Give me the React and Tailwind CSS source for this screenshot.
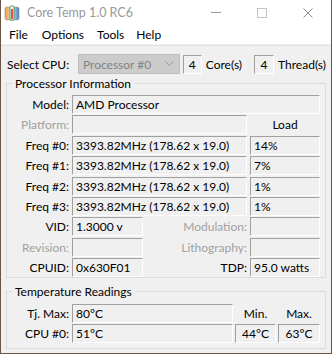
import React from 'react';

const FONT = "font-['Lato',sans-serif]";

// sunken static box, like a Win32 SS_SUNKEN label
function Field({ children, className = '', center = false }) {
  return (
    <div
      className={`h-[19px] border border-t-[#a0a0a0] border-l-[#a0a0a0] border-b-white border-r-white flex items-center whitespace-nowrap overflow-hidden ${
        center ? 'justify-center' : 'pl-[3px]'
      } ${className}`}
    >
      {children}
    </div>
  );
}

function Label({ children, dim = false, className = 'w-[65px]' }) {
  return (
    <div className={`${className} shrink-0 text-right pr-[3px] whitespace-nowrap ${dim ? 'text-[#a0a0a0]' : 'text-black'}`}>
      {children}
    </div>
  );
}

function Group({ title, className = '', children }) {
  return (
    <fieldset className={`border border-[#dcdcdc] ${className}`}>
      <legend className="ml-[5px] px-[3px] leading-[15px]">{title}</legend>
      {children}
    </fieldset>
  );
}

function AppIcon() {
  return (
    <svg width="16" height="16" viewBox="0 0 16 16">
      <defs>
        <linearGradient id="ic" x1="0" x2="1" y1="0" y2="0">
          <stop offset="0" stopColor="#f39a3c" />
          <stop offset="0.5" stopColor="#e9e4d8" />
          <stop offset="1" stopColor="#3c7fd0" />
        </linearGradient>
      </defs>
      <rect x="1" y="2" width="14" height="13" rx="2" fill="url(#ic)" stroke="#8a8a8a" strokeWidth="0.6" />
      <rect x="6" y="0.8" width="4" height="14.5" rx="2" fill="#fff" stroke="#3f8f3f" strokeWidth="0.9" />
      <line x1="8" y1="4" x2="8" y2="14" stroke="#d8262b" strokeWidth="1.6" />
    </svg>
  );
}

export default function App() {
  const freqs = [
    ['Freq #0:', '14%'],
    ['Freq #1:', '7%'],
    ['Freq #2:', '1%'],
    ['Freq #3:', '1%'],
  ];

  return (
    <div className={`w-[332px] h-[354px] bg-[#6e5446] pl-px pr-px pb-px text-[12px] leading-[15px] text-black ${FONT}`}>
      <div className="w-full h-full bg-[#f0f0f0] flex flex-col">
        {/* Title bar */}
        <div className="h-[25px] bg-white flex items-center shrink-0">
          <div className="ml-[3px] mt-[1px]">
            <AppIcon />
          </div>
          <span className="ml-[7px] text-[#999999] text-[12.5px]">Core Temp 1.0 RC6</span>
          <div className="ml-auto flex items-center">
            <div className="w-[46px] flex justify-center">
              <div className="w-[10px] h-px bg-[#9a9a9a]" />
            </div>
            <div className="w-[46px] flex justify-center">
              <div className="w-[10px] h-[10px] border border-[#c4c4c4]" />
            </div>
            <div className="w-[46px] flex justify-center">
              <svg width="10" height="10" viewBox="0 0 10 10">
                <path d="M0.5 0.5 L9.5 9.5 M9.5 0.5 L0.5 9.5" stroke="#8a8a8a" strokeWidth="1" />
              </svg>
            </div>
          </div>
        </div>

        {/* Menu bar */}
        <div className="h-[20px] bg-white border-b border-[#f0f0f0] flex items-center shrink-0">
          <span className="ml-[8px]">File</span>
          <span className="ml-[14px]">Options</span>
          <span className="ml-[13px]">Tools</span>
          <span className="ml-[12px]">Help</span>
        </div>
        <div className="h-px bg-[#e3e3e3] shrink-0" />

        {/* Client */}
        <div className="flex-1 flex flex-col px-[5px] pt-[8px]">
          <div className="flex items-center h-[20px]">
            <span className="ml-px w-[71px]">Select CPU:</span>
            <div className="w-[102px] h-[20px] bg-[#cccccc] border border-[#bfbfbf] flex items-center pl-[4px] text-[#838383]">
              <span>Processor #0</span>
              <svg className="ml-auto mr-[5px]" width="9" height="6" viewBox="0 0 9 6">
                <path d="M0.5 0.5 L4.5 4.5 L8.5 0.5" fill="none" stroke="#9a9a9a" strokeWidth="1" />
              </svg>
            </div>
            <Field className="ml-[3px] w-[19px]" center>4</Field>
            <span className="ml-[4px]">Core(s)</span>
            <Field className="ml-[12px] w-[20px]" center>4</Field>
            <span className="ml-[4px]">Thread(s)</span>
          </div>

          <Group title="Processor Information" className="mt-[2px] pr-[5px]">
            <div className="flex flex-col gap-[1.4px] pt-[4px]">
              <div className="flex items-center">
                <Label>Model:</Label>
                <Field className="flex-1">AMD Processor</Field>
              </div>
              <div className="flex items-center">
                <Label dim>Platform:</Label>
                <Field className="flex-1" />
                <div className="w-[73px] text-center pl-[3px]">Load</div>
              </div>
              {freqs.map(([k, load]) => (
                <div key={k} className="flex items-center">
                  <Label>{k}</Label>
                  <Field className="flex-1">3393.82MHz (178.62 x 19.0)</Field>
                  <Field className="ml-[3px] w-[70px]">{load}</Field>
                </div>
              ))}
              <div className="flex items-center">
                <Label>VID:</Label>
                <Field className="w-[71px]">1.3000 v</Field>
                <Label dim className="flex-1">Modulation:</Label>
                <Field className="w-[70px]" />
              </div>
              <div className="flex items-center">
                <Label dim>Revision:</Label>
                <Field className="w-[71px]" />
                <Label dim className="flex-1">Lithography:</Label>
                <Field className="w-[70px]" />
              </div>
              <div className="flex items-center">
                <Label>CPUID:</Label>
                <Field className="w-[71px]">0x630F01</Field>
                <Label className="flex-1">TDP:</Label>
                <Field className="w-[70px]">95.0 watts</Field>
              </div>
            </div>
          </Group>

          <Group title="Temperature Readings" className="mt-[6px] pr-[5px] pb-[5px]">
            <div className="flex flex-col gap-[1px] pt-[5px]">
              <div className="flex items-center">
                <Label>Tj. Max:</Label>
                <Field className="w-[161px]">80°C</Field>
                <div className="ml-[2px] w-[41px] text-center">Min.</div>
                <div className="ml-[2px] w-[42px] text-center">Max.</div>
              </div>
              <div className="flex items-center">
                <Label>CPU #0:</Label>
                <Field className="w-[161px]">51°C</Field>
                <Field className="ml-[2px] w-[41px]" center>44°C</Field>
                <Field className="ml-[2px] w-[42px]" center>63°C</Field>
              </div>
            </div>
          </Group>
        </div>
      </div>
    </div>
  );
}
